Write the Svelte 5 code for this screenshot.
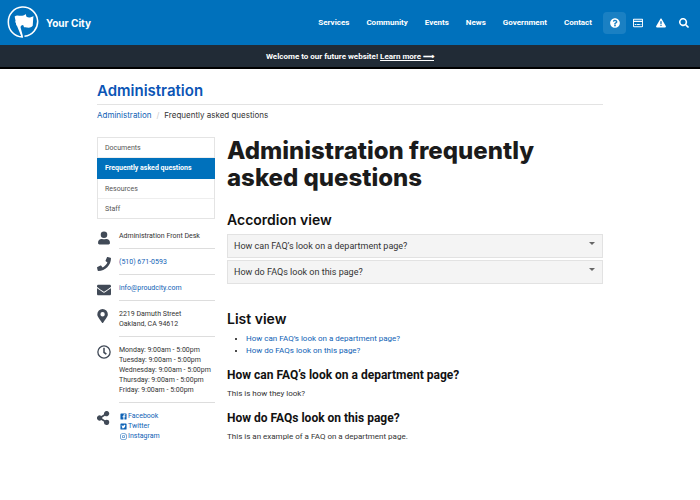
<script>
  const nav = ['Services', 'Community', 'Events', 'News', 'Government', 'Contact'];
  const menu = ['Documents', 'Frequently asked questions', 'Resources', 'Staff'];
  const hours = [
    'Monday: 9:00am - 5:00pm',
    'Tuesday: 9:00am - 5:00pm',
    'Wednesday: 9:00am - 5:00pm',
    'Thursday: 9:00am - 5:00pm',
    'Friday: 9:00am - 5:00pm'
  ];
  const faqs = [
    { id: 'faq-look', q: 'How can FAQ’s look on a department page?', a: 'This is how they look?' },
    { id: 'faq-page', q: 'How do FAQs look on this page?', a: 'This is an example of a FAQ on a department page.' }
  ];
  const actions = [
    { label: 'Answers', d: 'M504 256c0 137-111 248-248 248S8 393 8 256 119 8 256 8s248 111 248 248zM262 90c-54 0-89 23-116 64-4 5-2 12 3 16l34 26c5 4 13 3 17-2 18-23 30-36 57-36 20 0 45 13 45 33 0 15-12 22-32 33-24 13-55 30-55 72v8c0 7 5 12 12 12h56c7 0 12-5 12-12v-5c0-29 84-30 84-108 0-59-61-101-117-101zm-6 248a46 46 0 1 0 0 92 46 46 0 0 0 0-92z' },
    { label: 'Payments', d: 'M48 40h416c27 0 48 21 48 48v336c0 27-21 48-48 48H48c-27 0-48-21-48-48V88c0-27 21-48 48-48zm0 48v48h416V88zm0 122v214h416V210zm40 100h90v54H88zm120 0h144v54H208zm180 0h40v54h-40z' },
    { label: 'Issues', d: 'M506 420c16 28-4 62-36 62H42c-32 0-52-34-36-62L220 50c16-28 56-28 72 0zM256 342a36 36 0 1 0 0 72 36 36 0 0 0 0-72zm-36-158 8 122c0 8 5 12 12 12h32c7 0 12-4 12-12l8-122c0-8-5-14-12-14h-48c-7 0-12 6-12 14z' },
    { label: 'Search', d: 'M505 443 405 343c-4-5-10-7-17-7h-16a208 208 0 1 0-36 36v16c0 7 2 13 7 17l100 100c9 9 24 9 34 0l28-28c9-10 9-25 0-34zM208 336a128 128 0 1 1 0-256 128 128 0 0 1 0 256z' }
  ];
  const icons = {
    user: 'M256 256a120 120 0 1 0 0-240 120 120 0 0 0 0 240zm90 32h-20c-44 20-96 20-140 0h-20C92 288 40 340 40 412v40c0 26 22 44 48 44h336c26 0 48-18 48-44v-40c0-72-52-124-126-124z',
    phone: 'M493 25 389 1c-11-3-23 3-27 14l-48 112c-4 10-1 22 7 28l61 50c-36 77-99 140-177 177l-50-61c-6-8-18-11-28-7L15 362c-11 4-17 16-14 27l24 104c2 11 12 19 23 19 256 0 464-207 464-464 0-11-8-21-19-23z',
    mail: 'M502 191c4-3 10 0 10 5v204c0 26-22 48-48 48H48c-26 0-48-22-48-48V196c0-5 6-8 10-5 22 18 52 40 155 114 21 16 57 48 91 48s71-33 91-48c103-74 133-96 155-114zM256 320c23 0 57-29 74-42 134-97 144-105 175-130 4-3 7-8 7-13v-23c0-26-22-48-48-48H48c-26 0-48 22-48 48v23c0 5 3 10 7 13 31 25 41 33 175 130 17 13 51 42 74 42z',
    pin: 'M184 502C39 291 12 270 12 192a192 192 0 1 1 384 0c0 78-27 99-172 310-10 13-30 13-40 0zm20-230a80 80 0 1 0 0-160 80 80 0 0 0 0 160z',
    clock: 'M256 8a248 248 0 1 0 0 496 248 248 0 0 0 0-496zm0 448a200 200 0 1 1 0-400 200 200 0 0 1 0 400zm62-104-85-62c-3-2-5-6-5-10V116c0-7 5-12 12-12h32c7 0 12 5 12 12v142l67 48c5 4 6 12 2 17l-19 26c-3 5-11 7-16 3z',
    share: 'M352 320c-23 0-44 8-60 21l-102-64a97 97 0 0 0 0-42l102-64a96 96 0 1 0-34-54l-102 64a96 96 0 1 0 0 150l102 64a96 96 0 1 0 94-75z'
  };
  const social = [
    { name: 'Facebook', d: 'M80 32h352c26 0 48 22 48 48v352c0 26-22 48-48 48H326V314h56l11-70h-67v-45c0-19 9-38 40-38h30v-60s-28-5-54-5c-56 0-92 34-92 95v53h-62v70h62v166H80c-26 0-48-22-48-48V80c0-26 22-48 48-48z' },
    { name: 'Twitter', d: 'M80 32h352c26 0 48 22 48 48v352c0 26-22 48-48 48H80c-26 0-48-22-48-48V80c0-26 22-48 48-48zm300 150c16-10 24-22 31-36-13 6-25 10-40 12-48-48-122-12-109 53-55-2-104-28-136-69-17 30-9 65 20 88-11 0-21-3-30-8 0 33 23 59 53 66-10 2-20 3-30 1 8 27 32 46 62 46-28 22-61 32-97 28 128 80 280-10 276-181z' },
    { name: 'Instagram', d: 'M150 32h212c66 0 118 52 118 118v212c0 66-52 118-118 118H150c-66 0-118-52-118-118V150C32 84 84 32 150 32zm0 40c-44 0-78 34-78 78v212c0 44 34 78 78 78h212c44 0 78-34 78-78V150c0-44-34-78-78-78zm106 69a115 115 0 1 1 0 230 115 115 0 0 1 0-230zm0 40a75 75 0 1 0 0 150 75 75 0 0 0 0-150zm120-71a27 27 0 1 1 0 54 27 27 0 0 1 0-54z' }
  ];
  let open = $state([false, false]);
</script>

{#snippet icon(d)}
  <svg viewBox="0 0 512 512" aria-hidden="true"><path fill-rule="evenodd" d={d} /></svg>
{/snippet}

<header>
  <a class="brand" href="#home">
    <svg viewBox="0 0 34 34" aria-hidden="true">
      <path d="M9.2 15.6 15.8 32C7.6 31.6 1.4 25 1.4 17A15.1 15.1 0 1 1 18 31.2M12.6 20 15.8 32" fill="none" stroke="#fff" stroke-width="1.6" stroke-linejoin="round" />
      <path d="M7.9 10.8C11 8.2 15 12.3 19.2 8.3L20.1 11.2C22.5 12.2 24.7 11.8 27.2 10.2L26.5 20.4C23 24 20.4 21.2 17.6 22L16.6 19.6C14.9 19.7 14 20.8 13.4 22.4L9.7 19.8Z" fill="#fff" />
    </svg>
    <span>Your City</span>
  </a>
  <nav class="top" aria-label="Main">
    {#each nav as item}<a href="#{item.toLowerCase()}">{item}</a>{/each}
  </nav>
  <div class="actions">
    {#each actions as a, i}
      <button type="button" class:current={i === 0} aria-label={a.label}>{@render icon(a.d)}</button>
    {/each}
  </div>
</header>

<div class="banner">Welcome to our future website! <a href="#more">Learn more ⟶</a></div>

<div class="container">
  <div class="dept"><a href="#administration">Administration</a></div>
  <nav class="crumbs" aria-label="Breadcrumb">
    <a href="#administration">Administration</a><i>/</i><span>Frequently asked questions</span>
  </nav>

  <div class="columns">
    <aside>
      <nav class="menu" aria-label="Section">
        {#each menu as m, i}<a href="#section-{i}" class:active={i === 1}>{m}</a>{/each}
      </nav>
      <div class="contact">
        <div class="row">{@render icon(icons.user)}<div class="info">Administration Front Desk</div></div>
        <div class="row">{@render icon(icons.phone)}<div class="info"><a href="tel:5106710593">(510) 671-0593</a></div></div>
        <div class="row">{@render icon(icons.mail)}<div class="info"><a href="mailto:info@proudcity.com">info@proudcity.com</a></div></div>
        <div class="row">{@render icon(icons.pin)}<div class="info">2219 Damuth Street<br />Oakland, CA 94612</div></div>
        <div class="row">{@render icon(icons.clock)}<div class="info">{#each hours as h}<div>{h}</div>{/each}</div></div>
        <div class="row">
          {@render icon(icons.share)}
          <div class="info social">
            {#each social as s}<a href="#{s.name.toLowerCase()}">{@render icon(s.d)}{s.name}</a>{/each}
          </div>
        </div>
      </div>
    </aside>

    <main>
      <h1>Administration frequently asked questions</h1>
      <h2>Accordion view</h2>
      <div class="accordion">
        {#each faqs as f, i}
          <button type="button" aria-expanded={open[i]} onclick={() => (open[i] = !open[i])}>
            {f.q}<span class="caret"></span>
          </button>
          {#if open[i]}<p>{f.a}</p>{/if}
        {/each}
      </div>
      <h2>List view</h2>
      <ul>
        {#each faqs as f}<li><a href="#{f.id}">{f.q}</a></li>{/each}
      </ul>
      {#each faqs as f}
        <h3 id={f.id}>{f.q}</h3>
        <p>{f.a}</p>
      {/each}
    </main>
  </div>
</div>

<style>
  :global(body) {
    margin: 0;
    background: #fff;
    color: #333;
    font: 8px/12px Roboto, "Liberation Sans", sans-serif;
  }
  a { color: #0f62b5; text-decoration: none; }
  svg { display: block; fill: currentColor; flex: none; }
  button { font: inherit; color: inherit; cursor: pointer; }

  header {
    display: flex;
    align-items: center;
    height: 45px;
    padding: 0 5px 0 7px;
    background: #0071bc;
    color: #fff;
  }
  header a { color: #fff; font-weight: 700; }
  .brand { display: flex; align-items: center; gap: 6px; margin-right: auto; }
  .brand span { font: 700 10px/12px Inter, "Liberation Sans", sans-serif; }
  .brand svg { width: 33px; height: 33px; }
  .top { display: flex; gap: 17px; margin-right: 11px; }
  .actions { display: flex; }
  .actions button {
    display: grid;
    place-items: center;
    width: 23px;
    height: 22px;
    padding: 0;
    border: 0;
    border-radius: 4px;
    background: none;
  }
  .actions .current { background: #1a80c3; }
  .actions svg { width: 10px; height: 10px; }

  .banner {
    padding: 6px 0 4px;
    border-bottom: 2px solid #000;
    background: #212b36;
    color: #fff;
    font-weight: 700;
    text-align: center;
  }
  .banner a { color: #fff; text-decoration: underline; }

  .container { max-width: 506px; margin: 0 auto; padding: 12px 16px; }
  .dept {
    padding-bottom: 3px;
    border-bottom: 1px solid #e3e3e3;
    font: 600 15px/20px Inter, "Liberation Sans", sans-serif;
  }
  .dept a { color: #0b55b5; }
  .crumbs { padding: 4px 0 16px; font-family: Inter, "Liberation Sans", sans-serif; }
  .crumbs i { margin: 0 5px; color: #ccc; font-style: normal; }
  .columns { display: flex; gap: 12px; }
  aside { flex: 0 0 118px; min-width: 0; font-size: 7px; line-height: 10px; }
  .menu { border: 1px solid #e4e4e4; }
  .menu a {
    display: block;
    padding: 5px 7px 4px;
    border-bottom: 1px solid #eee;
    color: #555;
  }
  .menu a:last-child { border-bottom: 0; }
  .menu .active { margin: 0 -1px; padding: 5px 8px 6px; border: 0; background: #0071bc; color: #fff; font-weight: 700; }
  .contact { padding-top: 12px; }
  .row { display: flex; gap: 8px; margin-bottom: 8px; }
  .row > :global(svg) { width: 14px; height: 14px; color: #414a57; }
  .info { flex: 1; min-width: 0; padding-bottom: 7px; border-bottom: 1px solid #ddd; white-space: nowrap; }
  .row:last-child .info { border: 0; }
  .social a { display: flex; align-items: center; gap: 1px; padding-left: 1px; }
  .social :global(svg) { width: 7px; height: 7px; }

  main { flex: 1; min-width: 0; }
  h1, h2, h3, p, ul { margin: 0; }
  h1 { color: #1b1b1b; font: 800 24px/27px Inter, "Liberation Sans", sans-serif; margin-bottom: 20px; }
  h2 { color: #111; font: 600 14px/18px Inter, "Liberation Sans", sans-serif; margin-bottom: 5px; }
  h3 { color: #111; font-size: 12px; line-height: 15px; font-weight: 700; margin: 11px 0 5px; }
  .accordion { display: flex; flex-direction: column; gap: 2px; margin-bottom: 26px; }
  .accordion button {
    display: flex;
    justify-content: space-between;
    align-items: center;
    height: 24px;
    padding: 0 7px 0 6px;
    border: 1px solid #e2e2e2;
    background: #f4f4f4;
    font-size: 9px;
    text-align: left;
  }
  .caret { border: 3px solid transparent; border-top-color: #666; border-bottom: 0; margin-bottom: 5px; }
  ul { padding-left: 19px; }
  li::marker { color: #111; }
</style>
